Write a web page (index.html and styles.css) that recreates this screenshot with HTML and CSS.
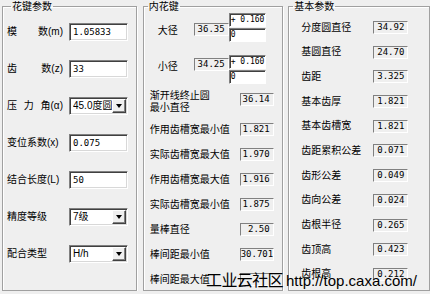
FILE: index.html
```html
<!DOCTYPE html>
<html lang="zh-CN">
<head>
    <meta charset="utf-8">
    <title>花键参数</title>
    <link rel="stylesheet" href="styles.css">
</head>
<body>
    <div class="panel">
        <fieldset class="group spline">
            <legend>花键参数</legend>
            <div class="row">
                <span class="lbl spread"><i>模</i><i>数(m)</i></span>
                <span class="edit">1.05833</span>
            </div>
            <div class="row">
                <span class="lbl spread"><i>齿</i><i>数(z)</i></span>
                <span class="edit">33</span>
            </div>
            <div class="row">
                <span class="lbl spread"><i>压</i><i>力</i><i>角(α)</i></span>
                <span class="edit combo"><span class="combo-text">45.0度圆柱</span><span class="drop"></span></span>
            </div>
            <div class="row">
                <span class="lbl">变位系数(x)</span>
                <span class="edit">0.075</span>
            </div>
            <div class="row">
                <span class="lbl">结合长度(L)</span>
                <span class="edit">50</span>
            </div>
            <div class="row">
                <span class="lbl">精度等级</span>
                <span class="edit combo"><span class="combo-text">7级</span><span class="drop"></span></span>
            </div>
            <div class="row">
                <span class="lbl">配合类型</span>
                <span class="edit combo"><span class="combo-text">H/h</span><span class="drop"></span></span>
            </div>
        </fieldset>

        <fieldset class="group internal">
            <legend>内花键</legend>
            <div class="dia-row first">
                <span class="lbl">大径</span>
                <span class="val">36.35</span>
                <span class="tol">
                    <span class="tol-box">+ 0.160</span>
                    <span class="tol-box">0</span>
                </span>
            </div>
            <div class="dia-row second">
                <span class="lbl">小径</span>
                <span class="val">34.25</span>
                <span class="tol">
                    <span class="tol-box">+ 0.160</span>
                    <span class="tol-box">0</span>
                </span>
            </div>
            <div class="vrow tall">
                <span class="lbl">渐开线终止圆<br>最小直径</span>
                <span class="val">36.14</span>
            </div>
            <div class="vrow"><span class="lbl">作用齿槽宽最小值</span><span class="val">1.821</span></div>
            <div class="vrow"><span class="lbl">实际齿槽宽最大值</span><span class="val">1.970</span></div>
            <div class="vrow"><span class="lbl">作用齿槽宽最大值</span><span class="val">1.916</span></div>
            <div class="vrow"><span class="lbl">实际齿槽宽最小值</span><span class="val">1.875</span></div>
            <div class="vrow"><span class="lbl">量棒直径</span><span class="val">2.50</span></div>
            <div class="vrow"><span class="lbl">棒间距最小值</span><span class="val">30.701</span></div>
            <div class="vrow"><span class="lbl">棒间距最大值</span><span class="val"></span></div>
        </fieldset>

        <fieldset class="group basic">
            <legend>基本参数</legend>
            <div class="brow"><span class="lbl">分度圆直径</span><span class="val">34.92</span></div>
            <div class="brow"><span class="lbl">基圆直径</span><span class="val">24.70</span></div>
            <div class="brow"><span class="lbl">齿距</span><span class="val">3.325</span></div>
            <div class="brow"><span class="lbl">基本齿厚</span><span class="val">1.821</span></div>
            <div class="brow"><span class="lbl">基本齿槽宽</span><span class="val">1.821</span></div>
            <div class="brow"><span class="lbl">齿距累积公差</span><span class="val">0.071</span></div>
            <div class="brow"><span class="lbl">齿形公差</span><span class="val">0.049</span></div>
            <div class="brow"><span class="lbl">齿向公差</span><span class="val">0.024</span></div>
            <div class="brow"><span class="lbl">齿根半径</span><span class="val">0.265</span></div>
            <div class="brow"><span class="lbl">齿顶高</span><span class="val">0.423</span></div>
            <div class="brow"><span class="lbl">齿根高</span><span class="val">0.212</span></div>
        </fieldset>
    </div>

    <div class="watermark"><span class="wm-cn">工业云社区</span><span class="wm-url">http://top.caxa.com/</span></div>
</body>
</html>
```

FILE: styles.css
```css
body {
    margin: 0;
    background-color: #efefef;
    font-family: "Liberation Sans", "Noto Sans CJK SC", sans-serif;
    font-size: 10px;
    color: #000;
    overflow: hidden;
}

.panel {
    display: flex;
    height: 291px;
    padding-left: 2px;
}

.group {
    margin: 0;
    padding: 0;
    min-width: 0;
    box-sizing: border-box;
    border: 1px solid #a0a0a0;
    box-shadow: inset 1px 1px 0 #fff, 1px 1px 0 #fff;
}
.group legend {
    margin-left: 4px;
    padding: 0 1px;
    line-height: 13px;
    font-size: 10px;
}

.lbl {
    line-height: 12px;
    white-space: nowrap;
}
.lbl i {
    font-style: normal;
}

/* left group: edit boxes */
.spline {
    width: 135px;
    padding: 10px 0 0 4px;
}
.row {
    display: flex;
    align-items: center;
    height: 18px;
    margin-bottom: 19px;
}
.row .lbl {
    width: 62px;
}
.row .spread {
    display: flex;
    justify-content: space-between;
    width: 56px;
    margin-right: 6px;
}
.edit {
    width: 59px;
    height: 18px;
    box-sizing: border-box;
    background: #fff;
    border: 1px solid;
    border-color: #808080 #fff #fff #808080;
    box-shadow: inset 1px 1px 0 #404040, inset -1px -1px 0 #d8d8d8;
    padding: 0 3px;
    line-height: 16px;
    font-family: "DejaVu Sans Mono", "Noto Sans CJK SC", monospace;
    font-size: 9px;
    white-space: nowrap;
    overflow: hidden;
}
.combo {
    display: flex;
    padding: 0 1px 0 3px;
}
.combo-text {
    flex: 1;
    overflow: hidden;
    font-family: "Liberation Sans", "Noto Sans CJK SC", sans-serif;
    font-size: 10px;
}
.drop {
    display: flex;
    align-items: center;
    justify-content: center;
    width: 14px;
    height: 14px;
    margin-top: 1px;
    box-sizing: border-box;
    background: #efefef;
    border: 1px solid;
    border-color: #fff #404040 #404040 #fff;
    box-shadow: inset -1px -1px 0 #808080;
}
.drop::after {
    content: "";
    border-left: 3px solid transparent;
    border-right: 3px solid transparent;
    border-top: 4px solid #000;
    margin-right: 1px;
}

/* read-only value boxes */
.val {
    height: 13px;
    box-sizing: border-box;
    border: 1px solid;
    border-color: #808080 #fff #fff #808080;
    padding-right: 3px;
    text-align: right;
    line-height: 11px;
    font-family: "DejaVu Sans Mono", monospace;
    font-size: 9px;
    white-space: nowrap;
    overflow: hidden;
}

/* middle group */
.internal {
    width: 141px;
    margin-left: 6px;
}
.dia-row {
    display: flex;
    align-items: flex-start;
    height: 29px;
}
.dia-row .lbl {
    width: 36px;
    margin-left: 14px;
}
.dia-row .val {
    width: 35px;
}
.dia-row.first .lbl { margin-top: 12px; }
.dia-row.first .val { margin-top: 10px; }
.dia-row.second { margin-top: 13px; }
.dia-row.second .lbl { margin-top: 6px; }
.dia-row.second .val { margin-top: 3px; }

.tol {
    display: flex;
    flex-direction: column;
    gap: 1px;
    width: 37px;
}
.tol-box {
    height: 14px;
    box-sizing: border-box;
    background: #fff;
    border: 1px solid;
    border-color: #808080 #fff #fff #808080;
    box-shadow: inset 1px 1px 0 #404040;
    padding-left: 1px;
    line-height: 12px;
    font-family: "DejaVu Sans Mono", monospace;
    font-size: 8px;
    white-space: nowrap;
    overflow: hidden;
}

.vrow {
    display: flex;
    align-items: center;
    height: 13px;
    margin-top: 12px;
}
.vrow .lbl {
    width: 90px;
    margin-left: 6px;
}
.vrow .val {
    width: 34px;
}
.vrow.tall {
    align-items: flex-start;
    height: 24px;
    margin-top: 6px;
}
.vrow.tall .val {
    margin-top: 3px;
}
.vrow.tall + .vrow {
    margin-top: 9px;
}

/* right group */
.basic {
    width: 142px;
    margin-left: 5px;
    padding-top: 8px;
}
.brow {
    display: flex;
    align-items: center;
    height: 13px;
    margin-bottom: 11.7px;
}
.brow .lbl {
    width: 72px;
    margin-left: 12px;
}
.brow .val {
    width: 35px;
}

.watermark {
    position: absolute;
    left: 206px;
    top: 268px;
    line-height: 22px;
    white-space: nowrap;
}
.wm-cn {
    font-family: "Noto Sans CJK SC", sans-serif;
    font-size: 16px;
    letter-spacing: -0.6px;
}
.wm-url {
    margin-left: 3px;
    font-family: "Liberation Sans", sans-serif;
    font-size: 15px;
}
```
